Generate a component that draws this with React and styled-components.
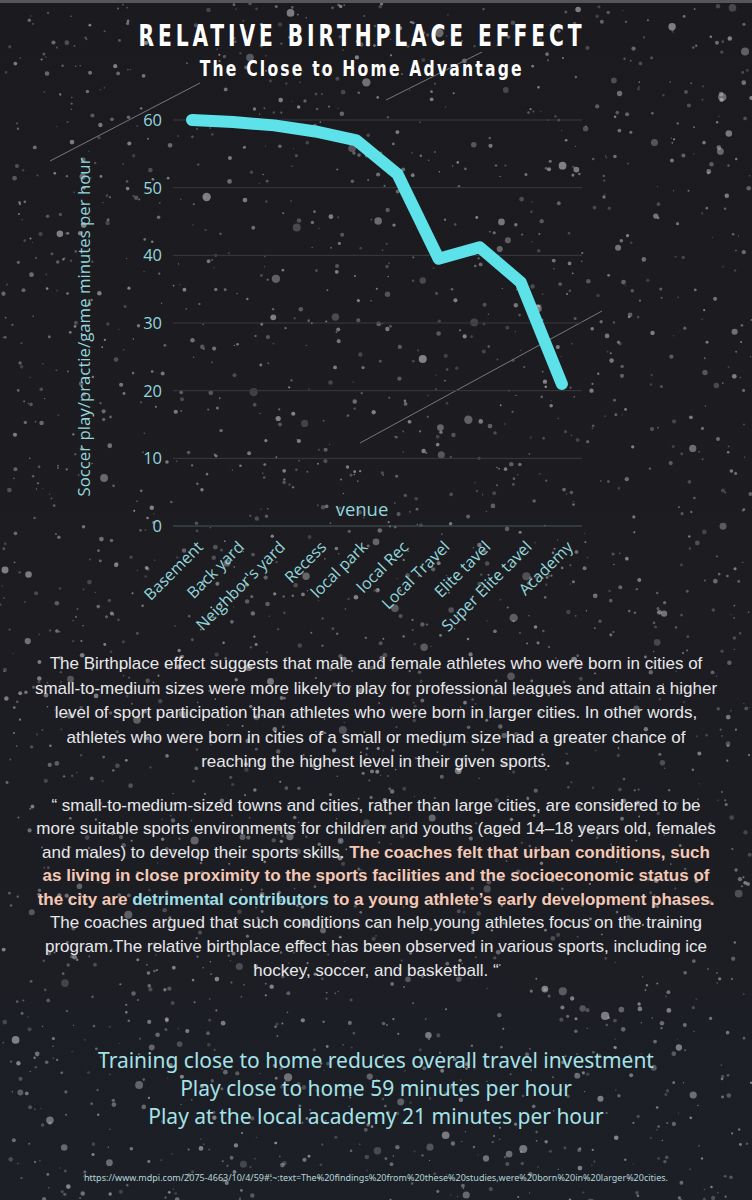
import React from "react";
import styled, { createGlobalStyle } from "styled-components";

const GlobalStyle = createGlobalStyle`
  html, body { margin: 0; padding: 0; background: #1c1c21; }
  #root { width: 752px; }
`;

const Page = styled.div`
  position: relative;
  width: 752px;
  min-height: 1200px;
  box-sizing: border-box;
  border-top: 3px solid #56565a;
  background: linear-gradient(180deg, #1b1a1f 0%, #1c1c21 50%, #1c1f26 100%);
  overflow: hidden;
  display: flex;
  flex-direction: column;
  align-items: center;
`;

const Starfield = styled.svg`
  position: absolute;
  left: 0;
  top: 0;
  z-index: 0;
  pointer-events: none;
`;

const Content = styled.div`
  position: relative;
  z-index: 1;
  width: 100%;
  display: flex;
  flex-direction: column;
  align-items: center;
`;

const Header = styled.header`
  display: flex;
  flex-direction: column;
  align-items: center;
  padding: 15px 28px 0 0;
`;

const Title = styled.h1`
  margin: 0;
  font-family: "Liberation Sans Narrow", "DejaVu Sans Condensed", "Roboto", sans-serif;
  font-weight: 700;
  font-size: 30px;
  line-height: 36px;
  letter-spacing: 5.2px;
  color: #ffffff;
  transform: scaleX(0.75);
`;

const Subtitle = styled.h2`
  margin: 3px 0 0;
  font-family: "Liberation Sans Narrow", "DejaVu Sans Condensed", "Roboto", sans-serif;
  font-weight: 700;
  font-size: 20.5px;
  line-height: 24px;
  letter-spacing: 2.6px;
  color: #ffffff;
  transform: scaleX(0.845);
`;

const ChartSvg = styled.svg`
  display: block;
  margin-top: 17px;
  font-family: "Open Sans", "Noto Sans", sans-serif;
`;

const Body = styled.p`
  margin: ${(p) => p.$mt}px 0 0;
  padding: 0 20px;
  font-family: "Liberation Sans", Arial, sans-serif;
  font-size: 17px;
  line-height: ${(p) => p.$lh}px;
  color: #e8e8ea;
  text-align: center;
  white-space: nowrap;
`;

const Strong = styled.strong`
  font-weight: 700;
  color: ${(p) => (p.$cyan ? "#9fdfe6" : "#f4c8b4")};
`;

const Takeaways = styled.div`
  margin-top: 64px;
  display: flex;
  flex-direction: column;
  align-items: center;
  font-family: "Noto Sans", "Open Sans", sans-serif;
  font-size: 21px;
  line-height: 28px;
  color: #a5e2e8;
`;

const Source = styled.div`
  margin-top: 42px;
  font-family: "Noto Sans", "Open Sans", sans-serif;
  font-size: 9px;
  line-height: 12px;
  color: #b6d6db;
  text-align: center;
`;

function mulberry32(a) {
  return function () {
    a |= 0;
    a = (a + 0x6d2b79f5) | 0;
    let t = Math.imul(a ^ (a >>> 15), 1 | a);
    t = (t + Math.imul(t ^ (t >>> 7), 61 | t)) ^ t;
    return ((t ^ (t >>> 14)) >>> 0) / 4294967296;
  };
}

const stars = (() => {
  const rnd = mulberry32(20240611);
  const out = [];
  for (let i = 0; i < 2400; i++) {
    const big = rnd();
    const r = big > 0.94 ? 2.6 + rnd() * 1.6 : big > 0.55 ? 1.4 + rnd() * 1.0 : 0.6 + rnd() * 0.8;
    out.push({
      x: rnd() * 752,
      y: rnd() * 1200,
      r,
      o: 0.22 + rnd() * 0.4,
    });
  }
  return out;
})();

const data = [
  ["Basement", 60],
  ["Back yard", 59.7],
  ["Neighbor's yard", 59.2],
  ["Recess", 58.3],
  ["local park", 57],
  ["local Rec", 52],
  ["Local Travel", 39.5],
  ["Elite tavel", 41.2],
  ["Super Elite tavel", 36],
  ["Academy", 21],
];

// chart svg starts at page y = OFF
const OFF = 98;
const y0 = 526 - OFF;
const unit = 6.767;
const xAt = (i) => 192 + i * 41.1;
const yAt = (v) => y0 - v * unit;

function Chart() {
  const pts = data.map(([, v], i) => `${xAt(i)},${yAt(v)}`).join(" ");
  return (
    <ChartSvg width="752" height="550" viewBox="0 0 752 550">
      {[10, 20, 30, 40, 50, 60].map((t) => (
        <line key={t} x1="173" x2="582" y1={yAt(t)} y2={yAt(t)} stroke="#3a3b41" strokeWidth="1" />
      ))}
      <line x1="173" x2="582" y1={yAt(0)} y2={yAt(0)} stroke="#44585e" strokeWidth="1" />
      {[0, 10, 20, 30, 40, 50, 60].map((t) => (
        <text key={t} x="162" y={yAt(t) + 6} textAnchor="end" fontSize="16.5" fill="#93d6dc">
          {t}
        </text>
      ))}
      <text
        transform={`translate(90 ${327 - OFF}) rotate(-90)`}
        textAnchor="middle"
        fontSize="16.8"
        fill="#93d6dc"
      >
        Soccer play/practie/game minutes per hour
      </text>
      <text x="362" y={516 - OFF} textAnchor="middle" fontSize="18.5" fill="#93d6dc">
        venue
      </text>
      {data.map(([label], i) => {
        const ax = xAt(i) + 12;
        const ay = y0 + 22;
        return (
          <text
            key={label}
            transform={`translate(${ax} ${ay}) rotate(-45)`}
            textAnchor="end"
            fontSize="16"
            fill="#93d6dc"
          >
            {label}
          </text>
        );
      })}
      <polyline
        points={pts}
        fill="none"
        stroke="#5ce2e8"
        strokeWidth="12"
        strokeLinejoin="round"
        strokeLinecap="round"
      />
    </ChartSvg>
  );
}

export default function App() {
  return (
    <>
      <GlobalStyle />
      <Page>
        <Starfield width="752" height="1200" viewBox="0 0 752 1200">
          {stars.map((s, i) => (
            <circle key={i} cx={s.x} cy={s.y} r={s.r} fill="#c4c4c6" fillOpacity={s.o} />
          ))}
          <line x1="50" y1="158" x2="200" y2="80" stroke="#77777c" strokeWidth="1" />
          <line x1="386" y1="97" x2="482" y2="49" stroke="#77777c" strokeWidth="1" />
          <line x1="360" y1="440" x2="602" y2="308" stroke="#77777c" strokeWidth="1" />
        </Starfield>
        <Content>
          <Header>
            <Title>RELATIVE BIRTHPLACE EFFECT</Title>
            <Subtitle>The Close to Home Advantage</Subtitle>
          </Header>
          <Chart />
          <Body $mt={4} $lh={24.5}>
            The Birthplace effect suggests that male and female athletes who were born in cities of
            <br />
            small-to-medium sizes were more likely to play for professional leagues and attain a higher
            <br />
            level of sport participation than athletes who were born in larger cities. In other words,
            <br />
            athletes who were born in cities of a small or medium size had a greater chance of
            <br />
            reaching the highest level in their given sports.
          </Body>
          <Body $mt={19} $lh={23.6}>
            “ small-to-medium-sized towns and cities, rather than large cities, are considered to be
            <br />
            more suitable sports environments for children and youths (aged 14–18 years old, females
            <br />
            and males) to develop their sports skills.{" "}
            <Strong>
              The coaches felt that urban conditions, such
              <br />
              as living in close proximity to the sports facilities and the socioeconomic status of
              <br />
              the city are <Strong $cyan>detrimental contributors</Strong> to a young athlete’s early
              development phases.
            </Strong>
            <br />
            The coaches argued that such conditions can help young athletes focus on the training
            <br />
            program.The relative birthplace effect has been observed in various sports, including ice
            <br />
            hockey, soccer, and basketball. “
          </Body>
          <Takeaways>
            <span>Training close to home reduces overall travel investment</span>
            <span>Play close to home 59 minutes per hour</span>
            <span>Play at the local academy 21 minutes per hour</span>
          </Takeaways>
          <Source>
            https://www.mdpi.com/2075-4663/10/4/59#:~:text=The%20findings%20from%20these%20studies,were%20born%20in%20larger%20cities.
          </Source>
        </Content>
      </Page>
    </>
  );
}
